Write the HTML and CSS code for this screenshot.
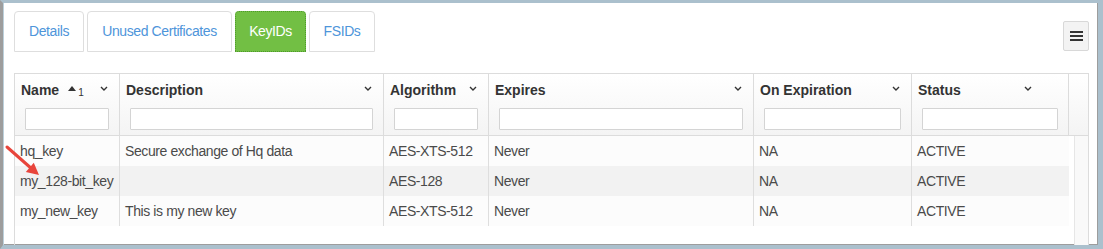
FILE: index.html
```html
<!DOCTYPE html>
<html>
<head>
<meta charset="utf-8">
<link rel="stylesheet" href="styles.css">
</head>
<body>
<div class="frame">
  <div class="toolbar">
    <div class="tabs">
      <div class="tab tab-details">Details</div>
      <div class="tab tab-unused">Unused Certificates</div>
      <div class="tab tab-keyids active">KeyIDs</div>
      <div class="tab tab-fsids">FSIDs</div>
    </div>
    <button class="menu-btn" type="button">
      <svg width="13" height="10" viewBox="0 0 13 10"><rect x="0" y="0" width="13" height="2" fill="#333"/><rect x="0" y="4" width="13" height="2" fill="#333"/><rect x="0" y="8" width="13" height="2" fill="#333"/></svg>
    </button>
  </div>

  <div class="grid">
    <div class="grid-head">
      <div class="hcell">
        <div class="htop"><span class="htitle">Name</span><span class="sort"><svg width="8" height="5" viewBox="0 0 8 5"><path d="M0 5L4 0L8 5Z" fill="#333"/></svg><span class="sortnum">1</span></span><svg class="caret" width="8" height="5" viewBox="0 0 8 5"><path d="M1 1L4 4L7 1" fill="none" stroke="#333" stroke-width="1.4"/></svg></div>
        <input class="filter" type="text">
      </div>
      <div class="hcell">
        <div class="htop"><span class="htitle">Description</span><svg class="caret" width="8" height="5" viewBox="0 0 8 5"><path d="M1 1L4 4L7 1" fill="none" stroke="#333" stroke-width="1.4"/></svg></div>
        <input class="filter" type="text">
      </div>
      <div class="hcell">
        <div class="htop"><span class="htitle">Algorithm</span><svg class="caret" width="8" height="5" viewBox="0 0 8 5"><path d="M1 1L4 4L7 1" fill="none" stroke="#333" stroke-width="1.4"/></svg></div>
        <input class="filter" type="text">
      </div>
      <div class="hcell">
        <div class="htop"><span class="htitle">Expires</span><svg class="caret" width="8" height="5" viewBox="0 0 8 5"><path d="M1 1L4 4L7 1" fill="none" stroke="#333" stroke-width="1.4"/></svg></div>
        <input class="filter" type="text">
      </div>
      <div class="hcell">
        <div class="htop"><span class="htitle">On Expiration</span><svg class="caret" width="8" height="5" viewBox="0 0 8 5"><path d="M1 1L4 4L7 1" fill="none" stroke="#333" stroke-width="1.4"/></svg></div>
        <input class="filter" type="text">
      </div>
      <div class="hcell">
        <div class="htop"><span class="htitle">Status</span><svg class="caret caret-status" width="8" height="5" viewBox="0 0 8 5"><path d="M1 1L4 4L7 1" fill="none" stroke="#333" stroke-width="1.4"/></svg></div>
        <input class="filter" type="text">
      </div>
      <div class="hcell filler"></div>
    </div>

    <div class="grid-body">
      <div class="rows">
        <div class="row">
          <div class="cell">hq_key</div>
          <div class="cell">Secure exchange of Hq data</div>
          <div class="cell">AES-XTS-512</div>
          <div class="cell">Never</div>
          <div class="cell">NA</div>
          <div class="cell">ACTIVE</div>
        </div>
        <div class="row alt">
          <div class="cell">my_128-bit_key</div>
          <div class="cell"></div>
          <div class="cell">AES-128</div>
          <div class="cell">Never</div>
          <div class="cell">NA</div>
          <div class="cell">ACTIVE</div>
        </div>
        <div class="row">
          <div class="cell">my_new_key</div>
          <div class="cell">This is my new key</div>
          <div class="cell">AES-XTS-512</div>
          <div class="cell">Never</div>
          <div class="cell">NA</div>
          <div class="cell">ACTIVE</div>
        </div>
      </div>
      <div class="scroll-track"></div>
    </div>
  </div>

  <svg class="arrow" width="60" height="60" viewBox="0 0 60 60">
    <line x1="4" y1="4" x2="29" y2="26" stroke="#e8453c" stroke-width="3" stroke-linecap="round"/>
    <path d="M36 32L22.8 29L30.8 19.8Z" fill="#e8453c"/>
  </svg>
</div>
</body>
</html>
```

FILE: styles.css
```css
* { box-sizing: border-box; }

html, body {
  margin: 0;
  padding: 0;
  background: #fff;
}

body {
  font-family: "Liberation Sans", Arial, Helvetica, sans-serif;
  font-size: 14px;
  color: #444;
}

.frame {
  position: relative;
  width: 1103px;
  height: 249px;
  border-style: solid;
  border-width: 3px 5px 4px 3px;
  border-color: #abc0cd #abc0cd #abc0cd #9d9d9d;
  box-shadow: inset 1px 0 0 #bcd0db, inset -1px -1px 0 #9d9d9d;
  padding: 8px 9px 0 11px;
  display: flex;
  flex-direction: column;
  overflow: hidden;
}

.toolbar {
  display: flex;
  justify-content: space-between;
  align-items: flex-start;
  height: 41px;
  flex: none;
}

.tabs {
  display: flex;
  gap: 3px;
}

.tab {
  height: 41px;
  line-height: 39px;
  padding: 0;
  text-align: center;
  border: 1px solid #dedede;
  border-radius: 4px 4px 0 0;
  color: #4e95da;
  background: #fff;
  font-size: 14px;
  letter-spacing: -0.4px;
  white-space: nowrap;
}

.tab-details { width: 70px; }
.tab-unused { width: 145px; }
.tab-keyids { width: 71px; }
.tab-fsids { width: 66px; }

.tab.active {
  background: #72bf44;
  color: #fff;
  border: 1px dotted #4f9a2c;
}

.menu-btn {
  margin-top: 10px;
  width: 26px;
  height: 30px;
  padding: 0;
  border: 1px solid #d8d8d8;
  border-radius: 2px;
  background: #f3f3f3;
  display: flex;
  align-items: center;
  justify-content: center;
}

.menu-btn svg { display: block; }

.grid {
  margin-top: 21px;
  width: 1075px;
  flex: 1;
  border: 1px solid #dcdcdc;
  border-bottom: none;
  display: flex;
  flex-direction: column;
}

.grid-head {
  display: grid;
  grid-template-columns: 105px 264px 105px 265px 158px 157px 1fr;
  height: 62px;
  border-bottom: 1px solid #dcdcdc;
  background: linear-gradient(#ffffff, #f4f4f4);
  flex: none;
}

.hcell {
  border-right: 1px solid #dcdcdc;
  padding: 7px 10px 0 10px;
  display: flex;
  flex-direction: column;
}

.hcell.filler { border-right: none; }

.htop {
  display: flex;
  align-items: center;
  height: 18px;
  margin: 0 1px 9px -4px;
}

.htitle {
  font-weight: bold;
  color: #333;
  font-size: 14px;
}

.sort {
  display: flex;
  align-items: flex-start;
  margin-left: 9px;
  margin-top: 1px;
}

.sort svg { display: block; margin-top: 2px; }

.sortnum {
  font-size: 10px;
  line-height: 10px;
  color: #333;
  margin-left: 2px;
  margin-top: 4px;
}

.caret {
  display: block;
  margin-left: auto;
  margin-top: -4px;
}

.caret-status { margin-right: 25px; }

.filter {
  display: block;
  width: 100%;
  height: 22px;
  border: 1px solid #d4d4d4;
  border-radius: 1px;
  background: #fff;
  margin: 0;
  padding: 0;
}

.grid-body {
  flex: 1;
  display: flex;
}

.rows {
  width: 1054px;
}

.row {
  display: grid;
  grid-template-columns: 105px 264px 105px 265px 158px 157px;
  height: 30px;
  background: #fcfcfc;
}

.row.alt { background: #f2f2f2; }

.cell {
  border-right: 1px solid #dedede;
  padding: 0 5px;
  line-height: 30px;
  white-space: nowrap;
  color: #4a4a4a;
  font-size: 14px;
  letter-spacing: -0.4px;
}

.cell:last-child { border-right: none; }

.scroll-track {
  margin-left: 5px;
  flex: 1;
  border-left: 1px solid #e6e6e6;
  background: #f9f9f9;
}

.arrow {
  position: absolute;
  left: 0;
  top: 140px;
  pointer-events: none;
}
```
